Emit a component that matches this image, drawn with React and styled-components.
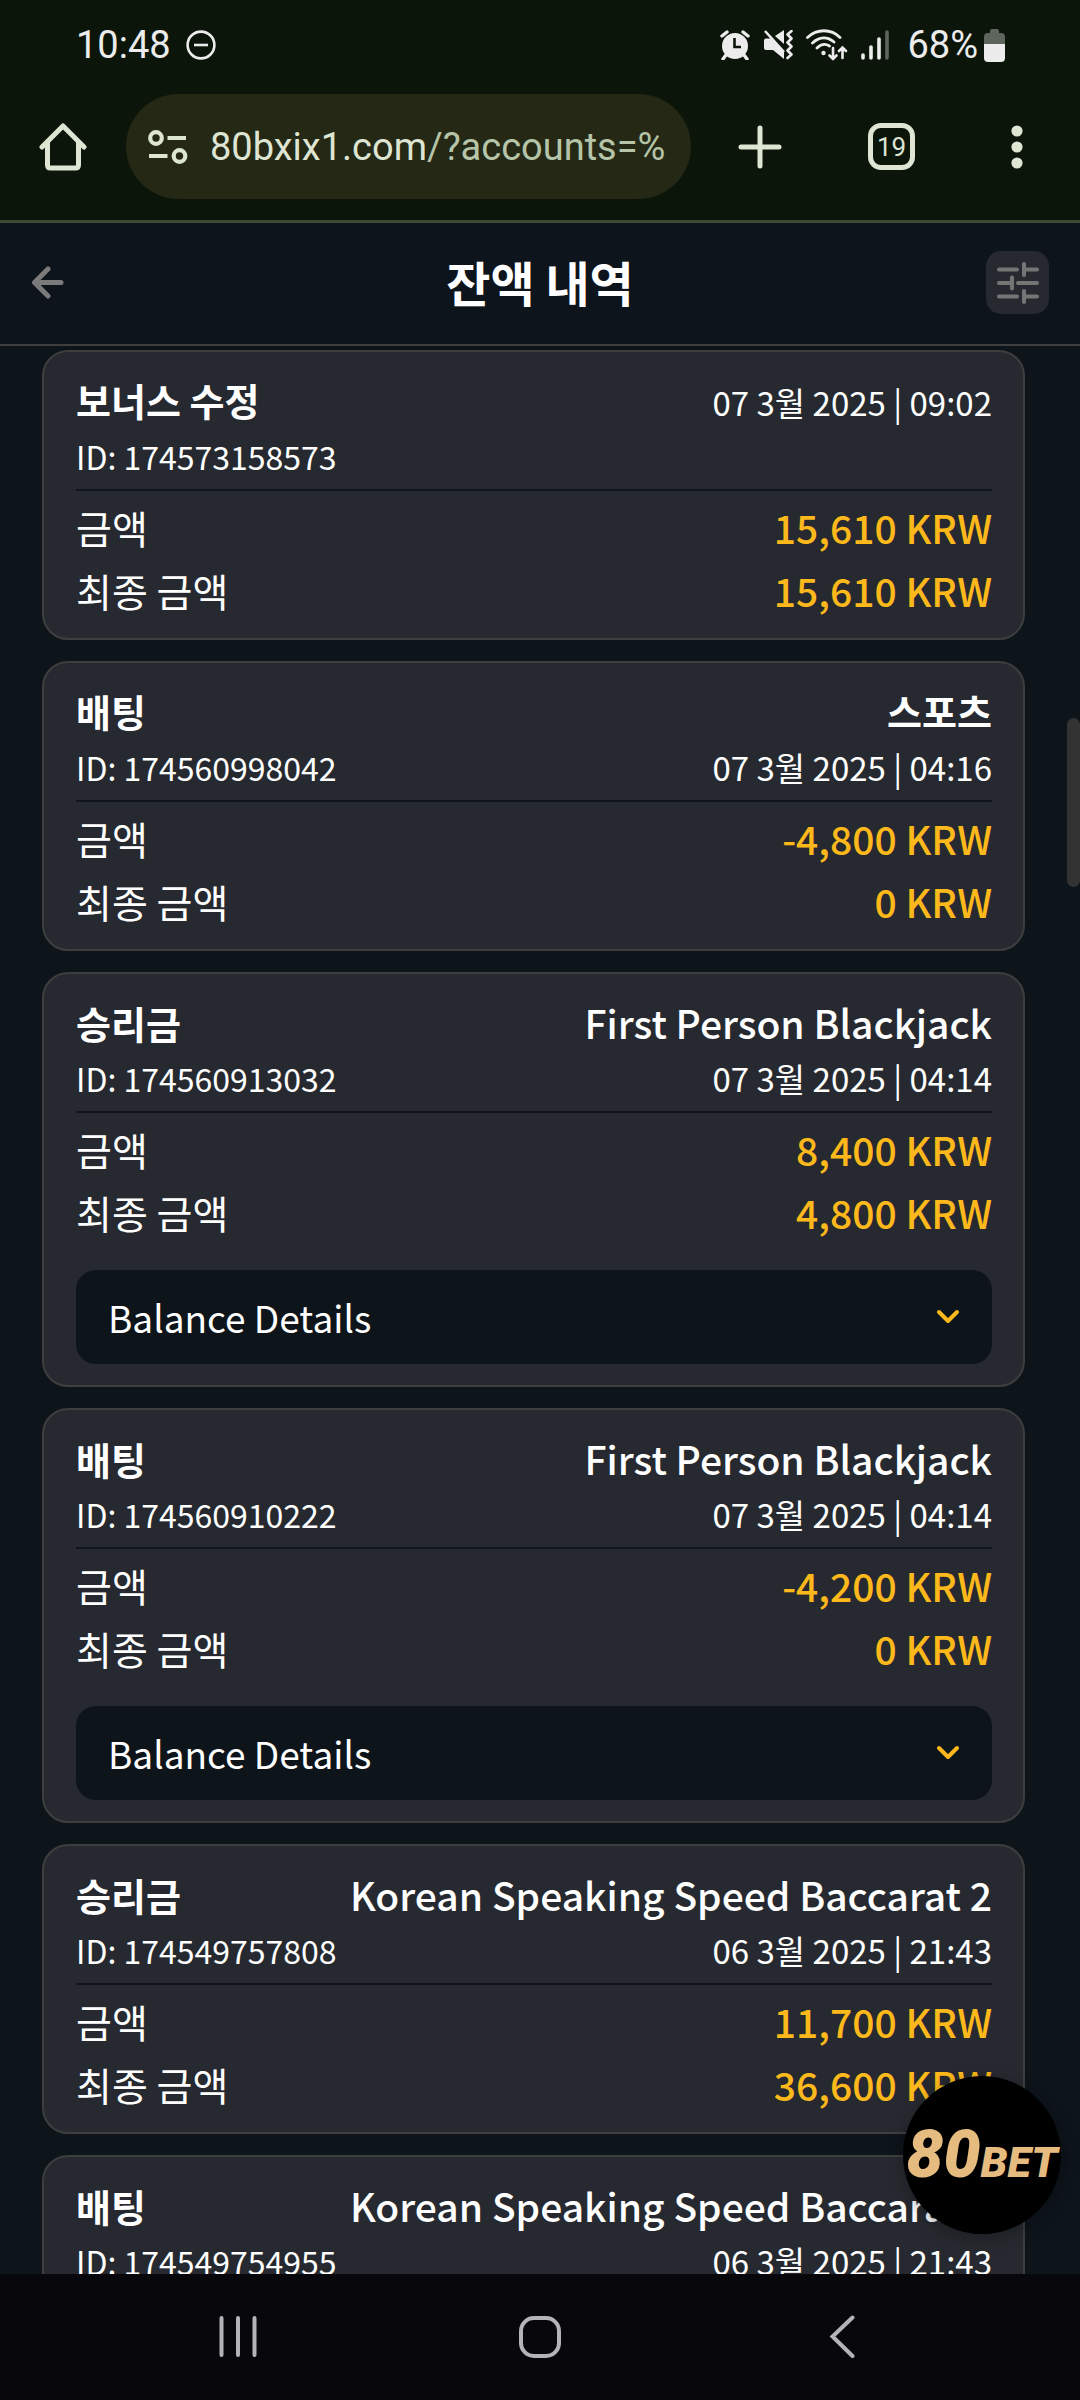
import React from 'react';
import styled, { createGlobalStyle } from 'styled-components';

const GlobalStyle = createGlobalStyle`
  *, *::before, *::after { box-sizing: border-box; }
  body {
    margin: 0;
    background: #0d141a;
    color: #ffffff;
    font-family: 'Noto Sans CJK KR', 'Noto Sans', sans-serif;
  }
  button {
    border: 0;
    padding: 0;
    margin: 0;
    background: none;
    color: inherit;
    font: inherit;
    cursor: pointer;
  }
  svg { display: block; flex: none; }
`;

const Screen = styled.div`
  height: 100vh;
  display: flex;
  flex-direction: column;
  position: relative;
  overflow: hidden;
`;

const BrowserChrome = styled.header`
  flex: none;
  background: #0b150a;
  border-bottom: 3px solid #3f4937;
  font-family: Roboto, 'Noto Sans', sans-serif;
`;

const StatusBar = styled.div`
  height: 90px;
  padding: 0 75px 0 76px;
  display: flex;
  align-items: center;
  justify-content: space-between;
  color: #ececec;
  font-size: 38px;
  line-height: 44px;
`;

const StatusGroup = styled.div`
  display: flex;
  align-items: center;
  gap: ${(p) => p.$gap}px;
`;

const BatteryGroup = styled(StatusGroup)`
  margin-left: 4px;
`;

const Toolbar = styled.div`
  display: flex;
  align-items: center;
  padding: 4px 0 21px;
  color: #dee5d3;
`;

const ToolButton = styled.button`
  width: ${(p) => p.$width}px;
  height: 105px;
  flex: none;
  display: flex;
  align-items: center;
  justify-content: center;
`;

const AddressBar = styled.div`
  flex: 1;
  min-width: 0;
  height: 105px;
  padding: 0 16px 0 22px;
  display: flex;
  align-items: center;
  gap: 22px;
  border-radius: 53px;
  background: #242814;
`;

const Address = styled.a`
  min-width: 0;
  overflow: hidden;
  white-space: nowrap;
  color: #dee5d3;
  font-size: 38px;
  line-height: 52px;
  text-decoration: none;
`;

const AddressPath = styled.span`
  color: #b6c5a9;
`;

const TabCount = styled.span`
  width: 47px;
  height: 47px;
  display: flex;
  align-items: center;
  justify-content: center;
  border: 5px solid currentColor;
  border-radius: 13px;
  font-size: 26px;
  line-height: 32px;
`;

const PageHeader = styled.div`
  flex: none;
  height: 123px;
  padding: 0 31px 2px;
  display: grid;
  grid-template-columns: 63px 1fr 63px;
  align-items: center;
  border-bottom: 2px solid #3e3e3e;
  background: #0e141b;
`;

const BackButton = styled.button`
  height: 63px;
  display: flex;
  align-items: center;
  color: #7a7a7a;
`;

const PageTitle = styled.h1`
  margin: 0;
  padding-bottom: 4px;
  text-align: center;
  font-size: 48px;
  line-height: 64px;
  font-weight: 700;
`;

const FilterButton = styled.button`
  width: 63px;
  height: 63px;
  display: flex;
  align-items: center;
  justify-content: center;
  border-radius: 15px;
  background: #262a30;
  color: #757575;
`;

const ListArea = styled.main`
  flex: 1;
  min-height: 0;
  position: relative;
  overflow: hidden;
  padding: 4px 55px 0 42px;
`;

const List = styled.div`
  display: flex;
  flex-direction: column;
  gap: 21px;
`;

const ScrollThumb = styled.div`
  position: absolute;
  top: 372px;
  right: 0;
  width: 13px;
  height: 169px;
  border-radius: 7px;
  background: #333333;
`;

const Card = styled.article`
  padding: 20px 31px 16px 32px;
  border: 2px solid #3e3e3e;
  border-radius: 26px;
  background: #262a30;
`;

const CardHead = styled.div`
  padding-bottom: 4px;
  border-bottom: 2px solid #10151d;
  margin-bottom: 5px;
`;

const Row = styled.div`
  display: flex;
  justify-content: space-between;
  align-items: baseline;
  height: ${(p) => p.$height}px;
  line-height: ${(p) => p.$height}px;
  white-space: nowrap;
`;

const CardTitle = styled.h2`
  margin: 0;
  font-size: 38px;
  font-weight: 700;
  line-height: inherit;
`;

const Game = styled.span`
  font-size: ${(p) => (p.$strong ? 38 : 39)}px;
  font-weight: ${(p) => (p.$strong ? 700 : 500)};
`;

const Meta = styled.span`
  font-size: 32px;
`;

const DateText = styled.time`
  font-size: 33px;
`;

const Label = styled.span`
  font-size: 39px;
`;

const Amount = styled.span`
  font-size: 39px;
  font-weight: 500;
  color: #fdb91b;
`;

const DetailsButton = styled.button`
  width: 100%;
  height: 94px;
  margin: 26px 0 5px;
  padding: 0 32px;
  display: flex;
  align-items: center;
  justify-content: space-between;
  border-radius: 20px;
  background: #0d141a;
  font-size: 37px;
  line-height: 56px;
`;

const ChatButton = styled.button`
  position: absolute;
  right: 19px;
  bottom: 166px;
  width: 158px;
  height: 158px;
  display: flex;
  align-items: baseline;
  justify-content: center;
  border-radius: 50%;
  background: #000000;
  box-shadow: 0 4px 16px rgba(0, 0, 0, 0.3);
  color: #e6bb80;
  font-family: Roboto, Inter, sans-serif;
  font-style: italic;
  font-weight: 900;
  line-height: 158px;
`;

const LogoText = styled.span`
  font-size: ${(p) => p.$size}px;
`;

const NavBar = styled.nav`
  flex: none;
  height: 126px;
  padding: 0 87px;
  display: grid;
  grid-template-columns: repeat(3, 1fr);
  background: #07070c;
  color: #b4b4b7;
`;

const NavButton = styled.button`
  display: flex;
  align-items: center;
  justify-content: center;
`;

const DndIcon = () => (
  <svg width="30" height="30" viewBox="0 0 30 30" fill="none" stroke="currentColor" strokeWidth="2.6" aria-hidden="true">
    <circle cx="15" cy="15" r="13.4" />
    <path d="M8 15h14" />
  </svg>
);

const AlarmIcon = () => (
  <svg width="30" height="30" viewBox="0 0 30 30" fill="none" aria-hidden="true">
    <circle cx="15" cy="16" r="13" fill="#ececec" />
    <path d="M2 6l5-4M28 6l-5-4M6 25l-3 4M24 25l3 4" stroke="#ececec" strokeWidth="3.4" strokeLinecap="round" />
    <path d="M14.500 8v9h6.500" stroke="#0b150a" strokeWidth="2.6" />
  </svg>
);

const MuteIcon = () => (
  <svg width="30" height="30" viewBox="0 0 30 30" fill="none" aria-hidden="true">
    <path d="M1 10.500q0-2 2-2h5L21 22v7L10 20H3q-2 0-2-2z" fill="#ececec" />
    <path d="M12 6l9-6v14z" fill="#ececec" />
    <path d="M2 1l19 21" stroke="#ececec" strokeWidth="2.600" />
    <path d="M28.500 1l-4 3.500 4 4-4 4 4 4-4 4 4 4-4 3.500" stroke="#ececec" strokeWidth="2.600" strokeLinejoin="round" strokeLinecap="round" />
  </svg>
);

const WifiIcon = () => (
  <svg width="42" height="34" viewBox="0 0 42 34" fill="none" stroke="#ececec" strokeWidth="2.800" strokeLinecap="round" aria-hidden="true">
    <path d="M1.500 9.500C11 .5 25 .5 34 9.500M6.500 15c7-6.500 15-6.500 21.500-1M11 20c4-4 8.500-4.500 12.500-2" />
    <circle cx="17.500" cy="25" r="2.200" fill="#ececec" stroke="none" />
    <path d="M27 20v11M23.500 27.500L27 31l3.500-3.500M36.500 30V19.500M33 23l3.500-3.500L40 23" strokeWidth="2.600" />
  </svg>
);

const SignalIcon = () => (
  <svg width="29" height="30" viewBox="0 0 29 30" stroke="#ececec" strokeWidth="3.600" strokeLinecap="round" aria-hidden="true">
    <path d="M2 25v3M10 17v11M18 9v19" />
    <path d="M26 2v26" stroke="#5d655c" />
  </svg>
);

const BatteryIcon = () => (
  <svg width="21" height="33" viewBox="0 0 21 33" aria-hidden="true">
    <path d="M6 4V2q0-2 2-2h5q2 0 2 2v2h2q4 0 4 4v7H0V8q0-4 4-4z" fill="#5d655c" />
    <path d="M0 15h21v14q0 4-4 4H4q-4 0-4-4z" fill="#ececec" />
  </svg>
);

const HomeIcon = () => (
  <svg width="48" height="48" viewBox="0 0 48 48" fill="none" stroke="currentColor" strokeWidth="5" strokeLinecap="round" strokeLinejoin="round" aria-hidden="true">
    <path d="M3 24L24 3l21 21M8.500 20v22q0 3 3 3h25q3 0 3-3V20" />
  </svg>
);

const SiteIcon = () => (
  <svg width="40" height="34" viewBox="0 0 40 34" fill="none" stroke="currentColor" strokeWidth="4.200" aria-hidden="true">
    <circle cx="8" cy="8" r="5.800" />
    <path d="M19.500 8H38M1 26h18.500" />
    <circle cx="31.500" cy="26" r="5.800" />
  </svg>
);

const PlusIcon = () => (
  <svg width="44" height="44" viewBox="0 0 44 44" stroke="currentColor" strokeWidth="5" strokeLinecap="round" aria-hidden="true">
    <path d="M22 3v38M3 22h38" />
  </svg>
);

const DotsIcon = () => (
  <svg width="12" height="44" viewBox="0 0 12 44" fill="currentColor" aria-hidden="true">
    <circle cx="6" cy="6" r="5.600" />
    <circle cx="6" cy="22" r="5.600" />
    <circle cx="6" cy="38" r="5.600" />
  </svg>
);

const BackArrowIcon = () => (
  <svg width="33" height="33" viewBox="0 0 33 33" fill="none" stroke="currentColor" strokeWidth="5" strokeLinecap="round" strokeLinejoin="round" aria-hidden="true">
    <path d="M30 16.500H4M17 3L3.500 16.500 17 30" />
  </svg>
);

const TuneIcon = () => (
  <svg width="42" height="42" viewBox="0 0 42 42" stroke="currentColor" strokeWidth="4" strokeLinecap="round" aria-hidden="true">
    <path d="M2 7.500h18M27 2v11M27 7.500h13M2 21h13M15 15.500v11M21 21h19M2 34.500h18M27 29v11M27 34.500h13" />
  </svg>
);

const ChevronIcon = () => (
  <svg width="24" height="16" viewBox="0 0 24 16" fill="none" stroke="#fdb91b" strokeWidth="4" strokeLinecap="round" strokeLinejoin="round" aria-hidden="true">
    <path d="M3 3l9 9 9-9" />
  </svg>
);

const RecentsIcon = () => (
  <svg width="40" height="42" viewBox="0 0 40 42" stroke="currentColor" strokeWidth="4" strokeLinecap="round" aria-hidden="true">
    <path d="M3.500 2v37M20 2v37M36.500 2v37" />
  </svg>
);

const NavHomeIcon = () => (
  <svg width="42" height="42" viewBox="0 0 42 42" fill="none" stroke="currentColor" strokeWidth="4" aria-hidden="true">
    <rect x="2" y="2" width="38" height="38" rx="13" />
  </svg>
);

const NavBackIcon = () => (
  <svg width="26" height="44" viewBox="0 0 26 44" fill="none" stroke="currentColor" strokeWidth="4" strokeLinecap="round" aria-hidden="true">
    <path d="M23.500 2.500L3.500 21.500l20 19.500" />
  </svg>
);

const transactions = [
  { type: '보너스 수정', id: '174573158573', date: '07 3월 2025 | 09:02', amount: '15,610', final: '15,610' },
  { type: '배팅', game: '스포츠', strong: true, id: '174560998042', date: '07 3월 2025 | 04:16', amount: '-4,800', final: '0' },
  { type: '승리금', game: 'First Person Blackjack', id: '174560913032', date: '07 3월 2025 | 04:14', amount: '8,400', final: '4,800', details: true },
  { type: '배팅', game: 'First Person Blackjack', id: '174560910222', date: '07 3월 2025 | 04:14', amount: '-4,200', final: '0', details: true },
  { type: '승리금', game: 'Korean Speaking Speed Baccarat 2', id: '174549757808', date: '06 3월 2025 | 21:43', amount: '11,700', final: '36,600' },
];

const latest = { type: '배팅', game: 'Korean Speaking Speed Baccarat 2', id: '174549754955', date: '06 3월 2025 | 21:43' };

const TransactionHead = ({ item }) => (
  <CardHead>
    <Row $height={56}>
      <CardTitle>{item.type}</CardTitle>
      {item.game ? <Game $strong={item.strong}>{item.game}</Game> : <DateText>{item.date}</DateText>}
    </Row>
    <Row $height={57}>
      <Meta>ID: {item.id}</Meta>
      {item.game && <DateText>{item.date}</DateText>}
    </Row>
  </CardHead>
);

const Transaction = ({ item }) => (
  <Card>
    <TransactionHead item={item} />
    <Row $height={63}>
      <Label>금액</Label>
      <Amount>{item.amount} KRW</Amount>
    </Row>
    <Row $height={63}>
      <Label>최종 금액</Label>
      <Amount>{item.final} KRW</Amount>
    </Row>
    {item.details && (
      <DetailsButton type="button" aria-expanded="false">
        Balance Details
        <ChevronIcon />
      </DetailsButton>
    )}
  </Card>
);

export default function App() {
  return (
    <>
      <GlobalStyle />
      <Screen>
        <BrowserChrome>
          <StatusBar>
            <StatusGroup $gap={15}>
              <span>10:48</span>
              <DndIcon />
            </StatusGroup>
            <StatusGroup $gap={13}>
              <AlarmIcon />
              <MuteIcon />
              <WifiIcon />
              <SignalIcon />
              <BatteryGroup $gap={6}>
                <span>68%</span>
                <BatteryIcon />
              </BatteryGroup>
            </StatusGroup>
          </StatusBar>
          <Toolbar>
            <ToolButton $width={126} type="button" aria-label="Home"><HomeIcon /></ToolButton>
            <AddressBar>
              <SiteIcon />
              <Address href="#">80bxix1.com<AddressPath>/?accounts=%</AddressPath></Address>
            </AddressBar>
            <ToolButton $width={138} type="button" aria-label="New tab"><PlusIcon /></ToolButton>
            <ToolButton $width={125} type="button" aria-label="Tabs"><TabCount>19</TabCount></ToolButton>
            <ToolButton $width={126} type="button" aria-label="Menu"><DotsIcon /></ToolButton>
          </Toolbar>
        </BrowserChrome>
        <PageHeader>
          <BackButton type="button" aria-label="Back"><BackArrowIcon /></BackButton>
          <PageTitle>잔액 내역</PageTitle>
          <FilterButton type="button" aria-label="Filter"><TuneIcon /></FilterButton>
        </PageHeader>
        <ListArea>
          <List>
            {transactions.map((item) => <Transaction key={item.id} item={item} />)}
            <Card>
              <TransactionHead item={latest} />
            </Card>
          </List>
          <ScrollThumb />
        </ListArea>
        <ChatButton type="button">
          <LogoText $size={66}>80</LogoText>
          <LogoText $size={43}>BET</LogoText>
        </ChatButton>
        <NavBar>
          <NavButton type="button" aria-label="Recents"><RecentsIcon /></NavButton>
          <NavButton type="button" aria-label="Home screen"><NavHomeIcon /></NavButton>
          <NavButton type="button" aria-label="Go back"><NavBackIcon /></NavButton>
        </NavBar>
      </Screen>
    </>
  );
}
